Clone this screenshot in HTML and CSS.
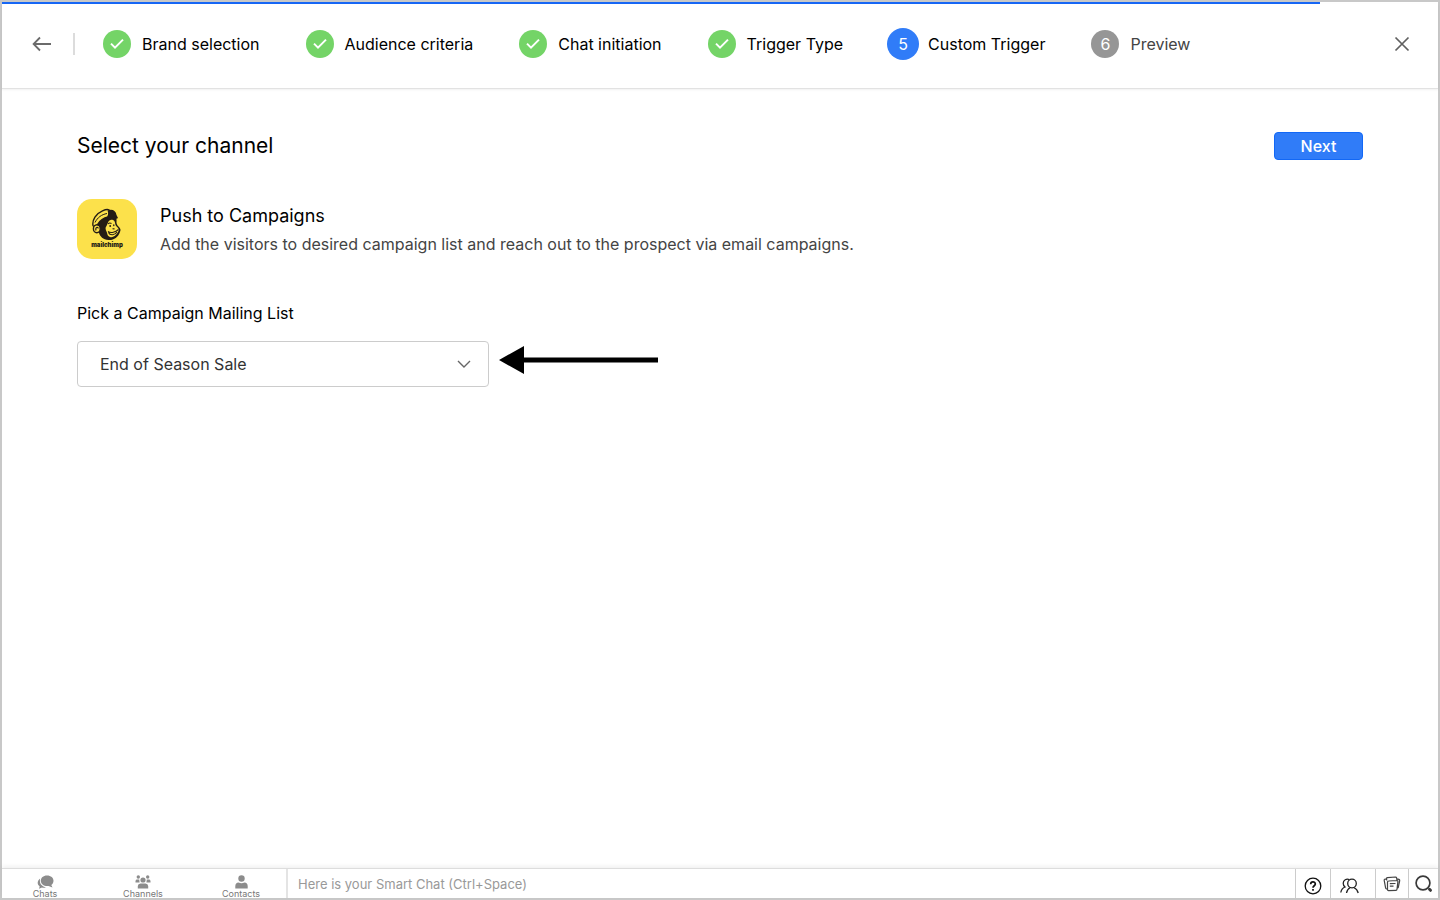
FILE: index.html
```html
<!DOCTYPE html>
<html lang="en">
<head>
<meta charset="utf-8">
<title>Custom Trigger</title>
<link rel="stylesheet" href="styles.css">
</head>
<body>
<div class="app">
  <progress class="progress" value="1318" max="1436" aria-label="Setup progress"></progress>
  <header class="header">
    <button class="icon-button back" type="button" aria-label="Back">
      <svg width="20" height="16" viewBox="0 0 20 16" fill="none" stroke="#6b6b6b" stroke-width="1.8"><path d="M8 1.5 1.6 8 8 14.5M1.6 8H19"/></svg>
    </button>
    <ol class="steps">
      <li class="step"><span class="badge done"><svg width="16" height="14" viewBox="0 0 16 14" fill="none" stroke="#fff" stroke-width="2"><path d="M2 6.6 6 10.6 14 2.6"/></svg></span>Brand selection</li>
      <li class="step"><span class="badge done"><svg width="16" height="14" viewBox="0 0 16 14" fill="none" stroke="#fff" stroke-width="2"><path d="M2 6.6 6 10.6 14 2.6"/></svg></span>Audience criteria</li>
      <li class="step"><span class="badge done"><svg width="16" height="14" viewBox="0 0 16 14" fill="none" stroke="#fff" stroke-width="2"><path d="M2 6.6 6 10.6 14 2.6"/></svg></span>Chat initiation</li>
      <li class="step"><span class="badge done"><svg width="16" height="14" viewBox="0 0 16 14" fill="none" stroke="#fff" stroke-width="2"><path d="M2 6.6 6 10.6 14 2.6"/></svg></span>Trigger Type</li>
      <li class="step" aria-current="step"><span class="badge current">5</span>Custom Trigger</li>
      <li class="step upcoming"><span class="badge">6</span>Preview</li>
    </ol>
    <button class="icon-button" type="button" aria-label="Close">
      <svg width="16" height="16" viewBox="0 0 16 16" fill="none" stroke="#606060" stroke-width="1.7"><path d="M1.5 1.5 14.5 14.5M14.5 1.5 1.5 14.5"/></svg>
    </button>
  </header>

  <main class="main">
    <div class="title-row">
      <h1 class="title">Select your channel</h1>
      <button class="next" type="button">Next</button>
    </div>
    <section class="channel">
      <div class="logo">
        <svg width="32" height="33" viewBox="0 0 32 33">
          <path fill="#241c15" d="M5 16 17 7 25 9C25.800 11 25.500 13 25.500 15C26 17 27 18 28 19C29.500 20.500 30 22 29 24C27 29.500 22.500 32.500 17.500 32C12 31.500 9 28.500 8 25L6 22Z"/>
          <path fill="#fce14b" d="M17 14.500C18 12 20 11.300 22 12C24.500 13 23.800 15.800 24.800 17.500C25.600 19 28 20 27.800 22C26.500 26.500 22.500 30 19 29C16.300 28.200 16.500 25.500 15.500 23.500C14.500 21.500 14 19.500 15.500 18Z"/>
          <path fill="#fce14b" stroke="#241c15" stroke-width="1.400" d="M2 17.500C1 12 5 5.500 11.500 2.800C14.500 1.500 18 1 19 3L17 9C12 10 9 12.500 6.500 16.500C4.500 18.500 2.500 19 2 17.500Z"/>
          <path fill="none" stroke="#241c15" stroke-width="1" d="M4 14.500C6.500 9.500 10.500 6.500 16 5.500"/>
          <path fill="#241c15" d="M16.500 2.500C21 .5 25 2.500 25.500 7L27 10C25 12 21.500 8.800 15.500 10.500C17.500 7 17.500 5 16.500 2.500Z"/>
          <ellipse cx="5.800" cy="20.800" rx="3.400" ry="3.900" fill="#fce14b" stroke="#241c15" stroke-width="1.400"/>
          <path fill="none" stroke="#241c15" stroke-width="1.100" d="M5 22.500C4 18.800 7.200 18.800 7.200 20.500M17 16C18 14.800 19.500 14.900 20.500 15.500M17 23.500C20 25.500 24.500 24.200 27.500 21.500M17.500 24.500C19 28 24 27.200 26 24M21.500 20.800 23.500 20.900"/>
          <ellipse cx="19.200" cy="18" rx=".9" ry="1" fill="#241c15"/><ellipse cx="22.800" cy="17.300" rx=".7" ry="1" fill="#241c15"/>
        </svg>
        <span class="logo-name">mailchimp</span>
      </div>
      <div>
        <h2 class="channel-name">Push to Campaigns</h2>
        <p class="channel-text">Add the visitors to desired campaign list and reach out to the prospect via email campaigns.</p>
      </div>
    </section>
    <label class="field-label" for="mailing-list">Pick a Campaign Mailing List</label>
    <div class="field">
      <div class="select-box">
        <select class="select" id="mailing-list"><option>End of Season Sale</option></select>
        <svg class="chevron" width="14" height="9" viewBox="0 0 14 9" fill="none" stroke="#666" stroke-width="1.400"><path d="M1 1 7 7 13 1"/></svg>
      </div>
      <svg class="pointer" width="159" height="30" viewBox="0 0 159 30"><path d="M0 15 25 1V12.500H159V17.500H25V29Z"/></svg>
    </div>
  </main>

  <footer class="footer">
    <nav class="tabs">
      <button class="tab" type="button">
        <svg width="17" height="14" viewBox="0 0 17 14" fill="#8c8c8c"><path d="M10 .5C14 .5 16.500 2.800 16.500 5.700 16.500 7.600 15.600 9 14.300 10L15.500 12.500 11.500 11C7 11.500 3.800 9 3.800 5.700 3.800 2.800 6.200.5 10 .5Z"/><path d="M3.200 3.500C2 8 4.500 11.500 9 12.200 7.500 13 6 13 5 12.600L2 13.800 2.700 11.500C-.3 9.500.2 5.500 3.200 3.500Z"/></svg>
        <span>Chats</span>
      </button>
      <button class="tab" type="button">
        <svg width="16" height="14" viewBox="0 0 16 14" fill="#8c8c8c"><circle cx="8" cy="5" r="2.600"/><circle cx="3.300" cy="2" r="1.700"/><circle cx="12.700" cy="2" r="1.700"/><path d="M2.800 13.500V11Q3 8.700 5.500 8.500H10.500Q13 8.700 13.200 11V13.500ZM.5 7.500V6Q.8 4.600 2 4.600H4.200L4.600 7.500ZM15.500 7.500V6Q15.200 4.600 14 4.600H11.800L11.400 7.500Z"/></svg>
        <span>Channels</span>
      </button>
      <button class="tab" type="button">
        <svg width="13" height="14" viewBox="0 0 13 14" fill="#8c8c8c"><circle cx="6.500" cy="3.500" r="3.200"/><path d="M.3 13.500V11Q.5 7.800 3.500 7.500 6.500 9 9.500 7.500 12.500 7.800 12.700 11V13.500Z"/></svg>
        <span>Contacts</span>
      </button>
    </nav>
    <input class="smart-chat" type="text" aria-label="Smart Chat" placeholder="Here is your Smart Chat (Ctrl+Space)">
    <div class="tools">
      <button class="tool help" type="button" aria-label="Help">
        <svg width="18" height="18" viewBox="0 0 18 18" fill="none" stroke="#111" stroke-width="1.300"><circle cx="9" cy="9" r="7.800"/><path stroke-width="1.700" d="M6.700 7.200C6.700 4.200 11.300 4.200 11.300 7.100 11.300 8.800 9 8.800 9 10.800M9 12V13.700"/></svg>
      </button>
      <button class="tool people" type="button" aria-label="Visitors">
        <svg width="19" height="16" viewBox="0 0 19 16" fill="none" stroke="#222" stroke-width="1.300"><circle cx="12" cy="5.500" r="4.300"/><path d="M6.500 15C7 12 8.500 10.500 10.300 9.500M13.700 9.500C16 10.500 17.500 12 18.200 15M9.300 1.600C6.500.2 3.200 2.200 3.200 5.300 3.200 7 4 8.200 5 9 2.700 10 1.200 12 .8 14.500"/></svg>
      </button>
      <button class="tool notes" type="button" aria-label="Notes">
        <svg width="18" height="16" viewBox="0 0 18 16" fill="none" stroke="#444" stroke-width="1.200" stroke-linejoin="round"><path d="M5.500 5 14 4.500Q15 4.500 14.900 5.500L14 13.300Q13.900 14.300 13 14.300L5.500 14.600Q4.500 14.600 4.500 13.600V6Q4.500 5 5.500 5ZM4.300 13 3.500 12.800Q2.800 12.600 2.600 11.800L1.200 4.300Q1 3.300 2 3.100L3.500 2.800M3.800 4.500 3.500 2.800Q3.400 1.800 4.400 1.600L12.500 1Q13.400 1 13.600 1.900L14 4.300M14.400 12Q15.200 11.800 15.400 11L16.700 4.600Q16.800 3.700 16 3.400L13.800 2.800M6.800 7.700 12.500 7.500M6.800 10.200H10.500"/></svg>
      </button>
      <button class="tool search" type="button" aria-label="Search">
        <svg width="19" height="18" viewBox="0 0 19 18" fill="none" stroke="#3a3a3a"><circle cx="9" cy="8" r="6.900" stroke-width="1.700"/><path stroke-width="3" stroke-linecap="round" d="M15.500 14.300 16.500 15.300"/></svg>
      </button>
    </div>
  </footer>
</div>
</body>
</html>
```

FILE: styles.css
```css
* { box-sizing: border-box; }
body { margin: 0; font-family: Inter, "Liberation Sans", sans-serif; color: #000; background: #fff; }
h1, h2, p, ol { margin: 0; padding: 0; font-weight: 400; }
button, input, select { font: inherit; color: inherit; margin: 0; padding: 0; border: 0; background: none; }
svg { display: block; flex: none; }

.app { min-height: 100vh; display: flex; flex-direction: column; border: 2px solid #c8c8c8; border-top-width: 1px; }

.progress { appearance: none; display: block; width: 100%; height: 3px; border: 0; border-top: 1px solid #c8c8c8; background: #fff; }
.progress::-webkit-progress-bar { background: #fff; }
.progress::-webkit-progress-value { background: #1767f5; }

.header { display: flex; align-items: center; height: 85px; padding: 0 28px 4px 30px; border-bottom: 1px solid #e2e2e2; box-shadow: 0 1px 2px #0000000f; }
.icon-button { display: flex; align-items: center; justify-content: center; width: 16px; height: 22px; }
.back { width: 43px; border-right: 2px solid #dcdcdc; justify-content: flex-start; }
.steps { flex: 1; display: flex; align-items: center; gap: 46px; padding-left: 28px; list-style: none; font-size: 16px; line-height: 24px; white-space: nowrap; }
.step { display: flex; align-items: center; gap: 11px; }
.badge { display: flex; align-items: center; justify-content: center; width: 28px; height: 28px; border-radius: 50%; background: #969696; color: #fff; }
.done { background: #74d467; }
.current { width: 32px; height: 32px; margin: 0 -2px; background: #307cf8; }
.upcoming { color: #444; }

.main { flex: 1; padding: 43px 75px; }
.title-row { display: flex; align-items: center; justify-content: space-between; }
.title { font-size: 21px; line-height: 28px; }
.next { width: 89px; height: 28px; border: 1px solid #1268f6; border-radius: 4px; background: #307cf8; color: #fff; font-size: 16px; font-weight: 500; }
.channel { display: flex; gap: 23px; margin-top: 39px; }
.logo { display: flex; flex-direction: column; align-items: center; width: 60px; height: 60px; padding-top: 9px; border-radius: 15px; background: #fce14b; }
.logo-name { color: #241c15; font-size: 6px; line-height: 8px; font-weight: 900; }
.channel-name { font-size: 18px; line-height: 24px; padding-top: 5px; }
.channel-text { font-size: 16px; line-height: 24px; padding-top: 4px; color: #444; }
.field-label { display: block; width: max-content; margin-top: 42px; font-size: 16px; line-height: 24px; }
.field { display: flex; align-items: center; gap: 10px; margin-top: 16px; }
.select-box { position: relative; width: 412px; }
.select { appearance: none; display: block; width: 100%; height: 46px; padding: 0 44px 0 22px; border: 1px solid #ccc; border-radius: 4px; font-size: 16px; color: #333; }
.chevron { position: absolute; right: 18px; top: 19px; pointer-events: none; }
.pointer { margin-bottom: 8px; }

.footer { display: flex; height: 30px; border-top: 1px solid #ddd; box-shadow: 0 -2px 4px #0000000f; }
.tabs { display: flex; width: 286px; border-right: 2px solid #e4e4e4; }
.tab { flex: none; width: 98px; padding: 6px 12px 0 0; display: flex; flex-direction: column; align-items: center; font-size: 9px; line-height: 10px; color: #777; }
.tab:last-child { width: 90px; padding: 6px 4px 0 0; }
.smart-chat { flex: 1; min-width: 0; padding: 0 10px; font-size: 13px; outline: 0; }
.smart-chat::placeholder { color: #999; opacity: 1; }
.tools { display: flex; }
.tool { display: flex; align-items: center; justify-content: center; border-left: 1px solid #ccc; }
.help { width: 35px; padding-top: 4px; }
.people { width: 45px; padding: 4px 8px 0 0; }
.notes { width: 33px; }
.search { width: 30px; }
```
